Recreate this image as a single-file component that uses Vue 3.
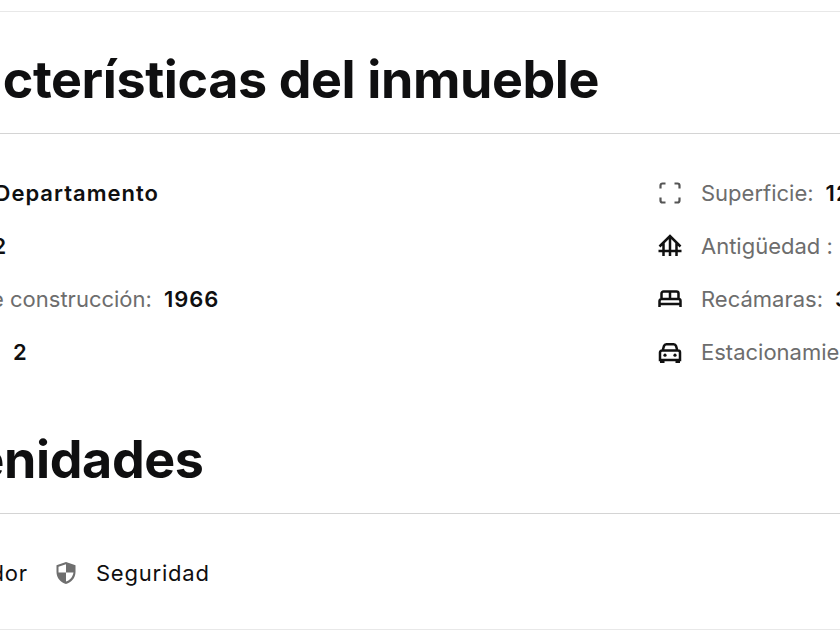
<script setup>
const left = [
  { label: 'Tipo:', value: 'Departamento' },
  { label: 'Piso:', value: '2' },
  { label: 'Año de construcción:', value: '1966' },
  { label: 'Baños:', value: '2' },
]
const right = [
  { label: 'Superficie:', value: '120 m²', icon: 'area' },
  { label: 'Antigüedad :', value: '58 años', icon: 'age' },
  { label: 'Recámaras:', value: '3', icon: 'bed' },
  { label: 'Estacionamientos:', value: '2', icon: 'car' },
]
</script>

<template>
  <main class="page">
    <div class="sheet">
      <section class="section first">
        <h2 class="title">Características del inmueble</h2>
        <div class="features">
          <ul class="col col-left">
            <li v-for="r in left" :key="r.label" class="row">
              <span class="label">{{ r.label }}</span>
              <strong class="value">{{ r.value }}</strong>
            </li>
          </ul>
          <ul class="col col-right">
            <li v-for="r in right" :key="r.label" class="row">
              <svg class="icon" viewBox="0 0 24 24" aria-hidden="true">
                <path v-if="r.icon === 'area'" class="stroke-grey" d="M7.500 2.500H4.500a2 2 0 0 0-2 2V7.500M16.500 2.500h3a2 2 0 0 1 2 2V7.500M7.500 21.500H4.500a2 2 0 0 1-2-2V16.500M16.500 21.500h3a2 2 0 0 0 2-2V16.500" />
                <path v-else-if="r.icon === 'age'" class="stroke-dark" d="M1.500 12.500 12 2l10.500 10.500M5.500 9v13M12 2v20M18.500 9v13M0.500 17h23" />
                <path v-else-if="r.icon === 'bed'" class="stroke-dark" d="M3.500 12V6.500a2 2 0 0 1 2-2h13a2 2 0 0 1 2 2V12M12 4.500V11M1.500 20v-6a2 2 0 0 1 2-2h17a2 2 0 0 1 2 2v6M1.500 17h21" />
                <g v-else>
                  <path class="stroke-dark" d="M4.500 11 6 6a2.500 2.500 0 0 1 2.400-1.700h7.200A2.500 2.500 0 0 1 18 6l1.500 5M4 10.500h16a2 2 0 0 1 2 2V20H2v-7.500a2 2 0 0 1 2-2Z" />
                  <path class="fill-dark" d="M2 20h4.500v3H2zM17.500 20H22v3h-4.500z" />
                  <circle class="fill-dark" cx="7" cy="15.200" r="1.600" />
                  <circle class="fill-dark" cx="17" cy="15.200" r="1.600" />
                </g>
              </svg>
              <span class="label">{{ r.label }}</span>
              <strong class="value">{{ r.value }}</strong>
            </li>
          </ul>
        </div>
      </section>

      <section class="section">
        <h2 class="title title-second">Amenidades</h2>
        <ul class="amenities">
          <li class="amenity">Elevador</li>
          <li class="amenity">
            <svg class="shield" viewBox="0 0 24 24" aria-hidden="true">
              <path fill="#6f6f6f" fill-rule="evenodd" d="M12 1 21.500 4.300V11c0 5.800-3.900 10.300-9.500 12C6.400 21.300 2.500 16.800 2.500 11V4.300L12 1Zm0 2.200L4.500 5.700v5.800H12V3.200Zm0 8.300v9.100c4-1.500 6.800-4.700 7.500-9.100H12Z" />
            </svg>
            Seguridad
          </li>
        </ul>
      </section>
    </div>
  </main>
</template>

<style>
html, body { margin: 0; background: #fff; overflow: hidden; }
</style>

<style scoped>
.page {
  width: 840px;
  height: 630px;
  overflow: hidden;
  font-family: Inter, "Liberation Sans", sans-serif;
  color: #0f0f10;
}
.sheet {
  width: 1400px;
  height: 617px;
  margin-left: -115px;
  border-top: 1px solid #e8e8e8;
  border-bottom: 1px solid #e8e8e8;
  position: relative;
  top: 11px;
}
.title {
  margin: 0;
  height: 122px;
  line-height: 136px;
  box-sizing: border-box;
  border-bottom: 1px solid #d4d4d4;
  font-size: 52px;
  font-weight: 700;
  letter-spacing: -0.4px;
  white-space: nowrap;
}
.title-second { text-indent: 3px; }
.features {
  display: grid;
  grid-template-columns: 773px 1fr;
  padding-top: 45px;
}
.col {
  list-style: none;
  margin: 0;
  padding: 0;
  display: flex;
  flex-direction: column;
  gap: 25px;
}
.col-left { padding-left: 45px; }
.row {
  display: flex;
  align-items: center;
  height: 28px;
  white-space: nowrap;
  font-size: 22px;
}
.icon {
  width: 24px;
  height: 24px;
  flex: none;
  margin-right: 19px;
}
.label {
  color: #6d6d6d;
  font-size: 22px;
  font-weight: 400;
}
.value {
  margin-left: 12px;
  font-weight: 600;
  letter-spacing: 1px;
}
.stroke-grey, .stroke-dark {
  fill: none;
}
.stroke-grey { stroke: #555; stroke-width: 2.2; }
.stroke-dark { stroke: #111; stroke-width: 2.5; }
.fill-dark { fill: #111; }
.section + .section { margin-top: 26px; }
.amenities {
  list-style: none;
  margin: 0;
  padding: 45px 0 0 46px;
  display: flex;
  gap: 26px;
}
.amenity {
  display: flex;
  align-items: center;
  gap: 18px;
  font-size: 22px;
  letter-spacing: 0.8px;
  line-height: 28px;
}
.shield { width: 24px; height: 24px; }
</style>
